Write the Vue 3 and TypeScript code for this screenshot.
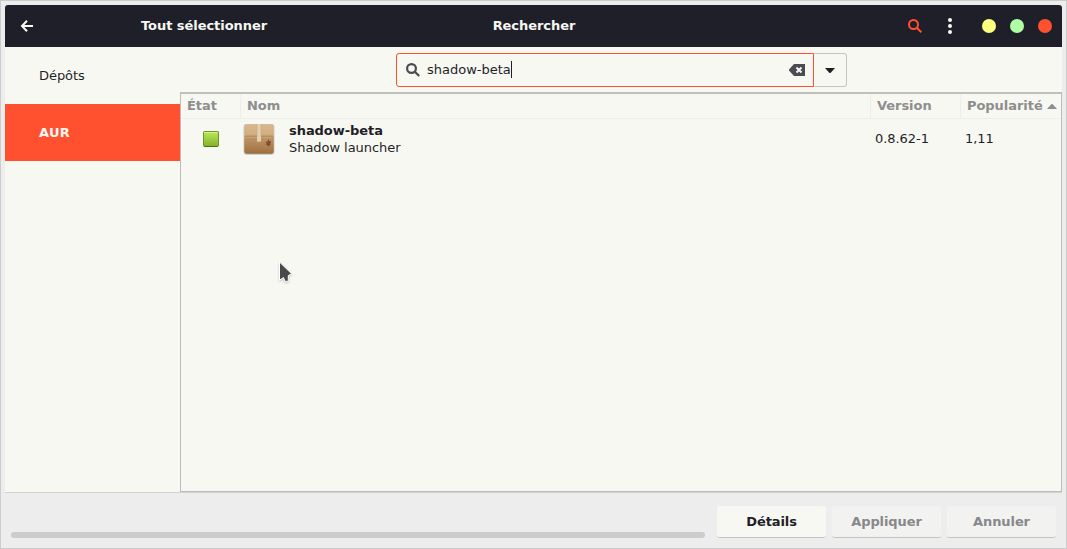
<script setup lang="ts">
import { ref } from 'vue'

interface Repo { id: string; label: string }
interface Pkg { name: string; description: string; version: string; popularity: string }

const repos: Repo[] = [
  { id: 'repos', label: 'Dépôts' },
  { id: 'aur', label: 'AUR' },
]
const current = ref('aur')
const query = ref('shadow-beta')
const packages: Pkg[] = [
  { name: 'shadow-beta', description: 'Shadow launcher', version: '0.8.62-1', popularity: '1,11' },
]
</script>

<template>
  <div class="window">
    <header class="titlebar">
      <svg class="back" width="14" height="14" viewBox="0 0 14 14">
        <path d="M7 1.8 2 7l5 5.2M2 7h11" />
      </svg>
      <span class="select-all">Tout sélectionner</span>
      <span class="title">Rechercher</span>
      <div class="controls">
        <svg class="find" width="14" height="14" viewBox="0 0 14 14">
          <circle cx="5.5" cy="5.5" r="4.5" />
          <path d="m8.8 8.8 4.5 4.5" />
        </svg>
        <svg class="more" width="4" height="16" viewBox="0 0 4 16">
          <circle cx="2" cy="2" r="2" /><circle cx="2" cy="8" r="2" /><circle cx="2" cy="14" r="2" />
        </svg>
        <i class="dot yellow"></i>
        <i class="dot green"></i>
        <i class="dot red"></i>
      </div>
    </header>

    <div class="body">
      <nav class="sidebar">
        <div
          v-for="r in repos"
          :key="r.id"
          class="repo"
          :class="{ active: r.id === current }"
          @click="current = r.id"
        >{{ r.label }}</div>
      </nav>

      <main class="main">
        <div class="searchbar">
          <div class="entry">
            <svg class="lens" width="14" height="14" viewBox="0 0 14 14">
              <circle cx="5.5" cy="5.5" r="4.4" />
              <path d="m8.8 8.8 4.4 4.2" />
            </svg>
            <span class="query">{{ query }}</span><i class="caret"></i>
            <svg class="clear" width="16" height="12" viewBox="0 0 16 12" @click="query = ''">
              <path class="tag" d="M5 0h11v12H5L0 6.5v-1z" />
              <path class="cross" d="m7.5 3.5 5 5m0-5-5 5" />
            </svg>
          </div>
          <div class="drop">
            <svg width="10" height="5" viewBox="0 0 10 5"><path d="M0 0h10L5.5 5h-1z" /></svg>
          </div>
        </div>

        <section class="list">
          <div class="row head">
            <span class="c-state">État</span>
            <span class="c-name">Nom</span>
            <span class="c-version">Version</span>
            <span class="c-pop">Popularité
              <svg width="10" height="5" viewBox="0 0 10 5"><path d="M0 5h10L5.5 0h-1z" /></svg>
            </span>
          </div>
          <div v-for="p in packages" :key="p.name" class="row item">
            <span class="c-state"><i class="state"></i></span>
            <span class="c-name">
              <svg class="box" width="32" height="32" viewBox="0 0 32 32">
                <defs>
                  <linearGradient id="lid" x1="0" y1="0" x2="0" y2="1">
                    <stop offset="0" stop-color="#d9b78c" /><stop offset="1" stop-color="#c49d6e" />
                  </linearGradient>
                  <linearGradient id="front" x1="0" y1="0" x2="0" y2="1">
                    <stop offset="0" stop-color="#c1986b" /><stop offset="1" stop-color="#9f7140" />
                  </linearGradient>
                </defs>
                <rect x="0.6" y="1" width="30.8" height="30.8" rx="3" fill="#8b9296" opacity=".5" />
                <rect x="1.4" y="1.2" width="29.2" height="29.4" rx="2.5" fill="url(#lid)" />
                <path d="M1.4 13h29.2v15.1a2.5 2.5 0 0 1-2.5 2.5H3.9a2.5 2.5 0 0 1-2.5-2.5z" fill="url(#front)" />
                <path d="M2.5 30h27" stroke="#94632f" opacity=".5" />
                <path d="M2 13.2h28" stroke="#946b40" stroke-width=".8" />
                <path d="M2 14h28" stroke="#e2c097" stroke-width=".7" opacity=".7" />
                <path d="M14 1h4v18h-4z" fill="#e3cfae" />
                <path d="M14 1v12M18 1v12" stroke="#c6a980" stroke-width=".6" />
                <path d="M14 19h4" stroke="#b48d60" stroke-width=".7" />
                <path d="m25.5 16.2 1 2h1.5v1.6l-1 .7 1 .8-1.5.9-1 1.8-1-1.8-2-.9 1.2-.8-1.2-.9 2-1.4z" fill="#80502b" />
              </svg>
              <span class="texts"><b>{{ p.name }}</b><span>{{ p.description }}</span></span>
            </span>
            <span class="c-version">{{ p.version }}</span>
            <span class="c-pop">{{ p.popularity }}</span>
          </div>
        </section>
      </main>
    </div>

    <footer class="footer">
      <div class="progress"></div>
      <button class="btn">Détails</button>
      <button class="btn" disabled>Appliquer</button>
      <button class="btn" disabled>Annuler</button>
    </footer>

    <svg class="pointer" width="16" height="24" viewBox="0 0 16 24">
      <path d="M1.5 1v18.2l4-2.6 1.5 3.8 3.3-.2v-5.7l3.4-1.7z" />
    </svg>
  </div>
</template>

<style>
body { margin: 0; overflow: hidden; }
</style>

<style scoped>
.window {
  position: relative;
  box-sizing: border-box;
  width: 1067px;
  height: 549px;
  padding: 4px 4px 0;
  border: 1px solid #cccccc;
  background: #ededed;
  color: #1f1f28;
  font-family: "DejaVu Sans", sans-serif;
  font-size: 13px;
  letter-spacing: -0.05px;
  display: flex;
  flex-direction: column;
  cursor: default;
}
.titlebar {
  height: 42px;
  flex: none;
  display: grid;
  grid-template-columns: 136px 300px 186px 1fr;
  align-items: center;
  border-radius: 3px 3px 0 0;
  background: #1f1f2a;
  color: #f7f8f2;
  font-weight: bold;
}
.select-all, .title { padding-bottom: 2px; }
.back { margin-left: 15px; fill: none; stroke: #f7f8f2; stroke-width: 2; }
.title { text-align: center; }
.controls { display: flex; align-items: center; justify-content: flex-end; padding-right: 10px; }
.find { fill: none; stroke: #ff5130; stroke-width: 2; margin-right: 26px; }
.more { fill: #f7f8f2; margin-right: 30px; }
.dot { width: 14px; height: 14px; border-radius: 50%; }
.dot + .dot { margin-left: 14px; }
.yellow { background: #ffff80; }
.green { background: #afffa5; }
.red { background: #ff5130; }

.body { flex: none; height: 445px; display: flex; background: #f7f8f2; }
.sidebar { width: 175px; }
.repo { height: 57px; line-height: 57px; padding-left: 34px; }
.repo.active { background: #ff5130; color: #f7f8f2; font-weight: bold; letter-spacing: 0.3px; }
.main { flex: 1; display: flex; flex-direction: column; }
.searchbar { height: 45px; flex: none; display: flex; padding: 6px 0 0 216px; box-sizing: border-box; }
.entry {
  width: 418px;
  height: 34px;
  box-sizing: border-box;
  border: 1px solid #ff5130;
  border-radius: 3px 0 0 3px;
  display: flex;
  align-items: center;
  padding: 0 8px 0 9px;
}
.lens { fill: none; stroke: #4b4b51; stroke-width: 2.2; margin-right: 7px; }
.query { padding-bottom: 2px; letter-spacing: 0; }
.caret { width: 1px; height: 17px; margin-bottom: 1px; background: #1f1f28; }
.clear { margin-left: auto; }
.tag { fill: #4b4b51; }
.cross { stroke: #f7f8f2; stroke-width: 2; }
.drop {
  width: 33px;
  height: 34px;
  box-sizing: border-box;
  border: 1px solid #c5c6c2;
  border-left: 0;
  border-radius: 0 3px 3px 0;
  display: flex;
  align-items: center;
  justify-content: center;
  fill: #1f1f28;
}
.list {
  flex: 1;
  border: 1px solid #bcbdba;
  border-top: 2px solid #c0c1bc;
}
.row { display: grid; grid-template-columns: 60px 630px 90px 1fr; }
.head { height: 25px; line-height: 23px; box-sizing: border-box; border-bottom: 1px solid #ededec; color: #8e8e8e; font-weight: bold; }
.head > span { padding-left: 6px; border-right: 1px solid #ededec; box-sizing: border-box; }
.head > .c-pop { border: 0; padding-right: 4px; display: flex; justify-content: space-between; align-items: flex-start; fill: #8e8e8e; }
.head svg { margin-top: 10px; }
.item { height: 40px; align-items: center; }
.item .c-state { display: flex; justify-content: center; }
.item .c-name { display: flex; align-items: center; padding-left: 2px; }
.item .c-version, .item .c-pop { padding: 0 0 2px 4px; }
.state {
  width: 16px;
  height: 16px;
  box-sizing: border-box;
  border: 1px solid #6c9526;
  border-bottom-color: #4c7012;
  border-radius: 2px;
  background: linear-gradient(#b9e85a, #84b22c);
  box-shadow: inset 0 1px #d2f58a;
}
.texts { display: flex; flex-direction: column; line-height: 17px; margin-left: 14px; }

.footer {
  flex: 1;
  box-sizing: border-box;
  display: flex;
  padding: 13px 6px 0;
  border-top: 1px solid #d2d2d0;
}
.progress { width: 694px; height: 6px; margin: 26px 12px 0 0; border-radius: 3px; background: #cccccc; flex: none; }
.btn {
  width: 109px;
  height: 32px;
  margin: 0 6px 0 0;
  padding: 0;
  border: 0;
  border-bottom: 1px solid #c3c4bb;
  border-radius: 3px;
  background: #f7f8f2;
  color: #1f1f28;
  font: bold 13px "DejaVu Sans", sans-serif;
  letter-spacing: -0.1px;
  flex: none;
}
.btn:last-child { margin-right: 0; }
.btn:disabled { background: #f2f2f0; color: #88888c; }
.pointer { position: absolute; left: 277px; top: 260px; fill: #494949; stroke: #fff; stroke-width: 1; filter: drop-shadow(0 1px 1px rgba(0, 0, 0, .2)); }
</style>
